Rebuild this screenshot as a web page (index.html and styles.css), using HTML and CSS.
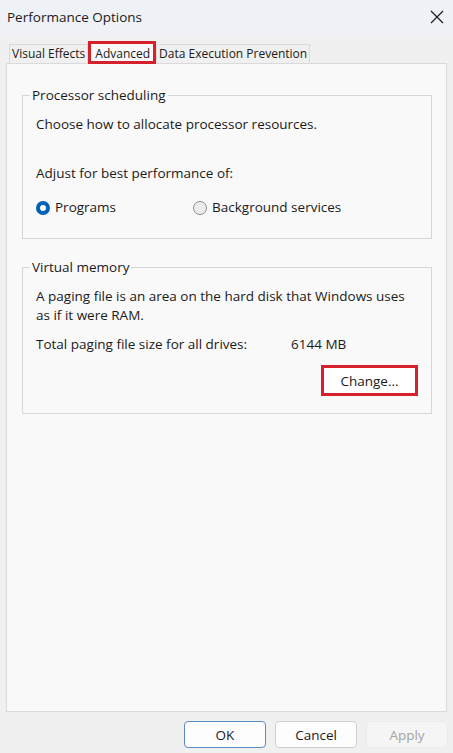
FILE: index.html
```html
<!DOCTYPE html>
<html>
<head>
<meta charset="utf-8">
<link rel="stylesheet" href="styles.css">
</head>
<body>
<div class="window">
  <div class="titlebar">
    <span class="title">Performance Options</span>
    <svg class="close" width="14" height="14" viewBox="0 0 14 14"><path d="M1 1L13 13M13 1L1 13" stroke="#1a1a1a" stroke-width="1.2" fill="none"/></svg>
  </div>
  <div class="body">
    <div class="tabs">
      <div class="tab">Visual Effects</div>
      <div class="tab active">Advanced</div>
      <div class="tab">Data Execution Prevention</div>
    </div>
    <div class="panel">
      <fieldset class="group group-proc">
        <legend>Processor scheduling</legend>
        <p class="line">Choose how to allocate processor resources.</p>
        <p class="line adjust">Adjust for best performance of:</p>
        <div class="radios">
          <label class="radio"><span class="dot checked"></span>Programs</label>
          <label class="radio second"><span class="dot"></span>Background services</label>
        </div>
      </fieldset>
      <fieldset class="group group-vm">
        <legend>Virtual memory</legend>
        <p class="line">A paging file is an area on the hard disk that Windows uses as if it were RAM.</p>
        <div class="total"><span class="total-label">Total paging file size for all drives:</span><span>6144 MB</span></div>
        <div class="change-row"><div class="highlight"><button class="btn change">Change...</button></div></div>
      </fieldset>
    </div>
    <div class="footer">
      <button class="btn ok">OK</button>
      <button class="btn">Cancel</button>
      <button class="btn disabled">Apply</button>
    </div>
  </div>
</div>
</body>
</html>
```
FILE: styles.css
```css
* { box-sizing: border-box; }
html, body { margin: 0; padding: 0; }
body {
  width: 453px;
  height: 753px;
  overflow: hidden;
  font-family: "Segoe UI", "Open Sans", "Noto Sans", sans-serif;
  font-size: 13.5px;
  color: #1a1a1a;
  background: #f0f0f0;
}
.window { display: flex; flex-direction: column; height: 753px; }
.titlebar {
  height: 34px;
  background: #eef1f6;
  display: flex;
  align-items: center;
  justify-content: space-between;
  padding: 0 9px 0 7px;
}
.title { font-size: 13.5px; color: #1a1a1a; }
.close { display: block; }
.body { flex: 1; display: flex; flex-direction: column; padding: 0 6px 0 6px; }
.tabs { display: flex; margin-top: 10px; margin-left: 3px; height: 19px; align-items: flex-end; position: relative; z-index: 1; }
.tab {
  font-size: 12px;
  line-height: 17px;
  height: 19px;
  padding: 0 2px;
  border: 1px solid #d9d9d9;
  border-bottom: none;
  background: #f0f0f0;
}
.tab.active {
  height: 23px;
  line-height: 19px;
  padding: 0 3px 0 4px;
  background: #f9f9f9;
  border: 3px solid #d6202c;
  margin-bottom: -1px;
}
.panel {
  height: 649px;
  background: #f9f9f9;
  border: 1px solid #dadada;
  padding: 22px 14px 0 15px;
}
.group {
  margin: 0;
  border: 1px solid #d6d6d6;
  padding: 0 13px;
}
.group legend {
  padding: 0 2px;
  margin-left: -6px;
  line-height: 19px;
}
.line { margin: 0; line-height: 19px; }
.group-proc { height: 153px; padding-top: 10px; }
.adjust { margin-top: 30px; }
.radios { display: flex; margin-top: 15px; line-height: 19px; }
.radio { display: flex; align-items: center; }
.radio.second { margin-left: 77px; }
.dot {
  width: 14px; height: 14px; border-radius: 50%;
  border: 1px solid #8a8a8a;
  background: #ececec;
  margin-right: 5px;
}
.dot.checked { border: 4.5px solid #005fb8; background: #fff; }
.group-vm { margin-top: 19px; height: 156px; padding-top: 10px; padding-right: 10px; }
.total { display: flex; margin-top: 10px; line-height: 19px; }
.total-label { width: 255px; }
.change-row { display: flex; justify-content: flex-end; margin-top: 11px; margin-right: 3px; }
.highlight { border: 3px solid #d6202c; padding: 0 2px; background: #fff; }
.btn {
  font-family: inherit;
  font-size: 13.5px;
  color: #1a1a1a;
  background: #fdfdfd;
  border: 1px solid #d0d0d0;
  border-radius: 4px;
  width: 82px;
  height: 27px;
  padding: 0;
}
.change { display: block; border: none; width: 87px; height: 25px; background: #fff; }
.footer { display: flex; justify-content: flex-end; gap: 9px; padding: 9px 0 0; margin-right: -1px; }
.btn.ok { border: 1px solid #5b8cc4; }
.btn.disabled { background: #f5f5f5; border-color: #ececec; color: #a3a3a3; }
```
